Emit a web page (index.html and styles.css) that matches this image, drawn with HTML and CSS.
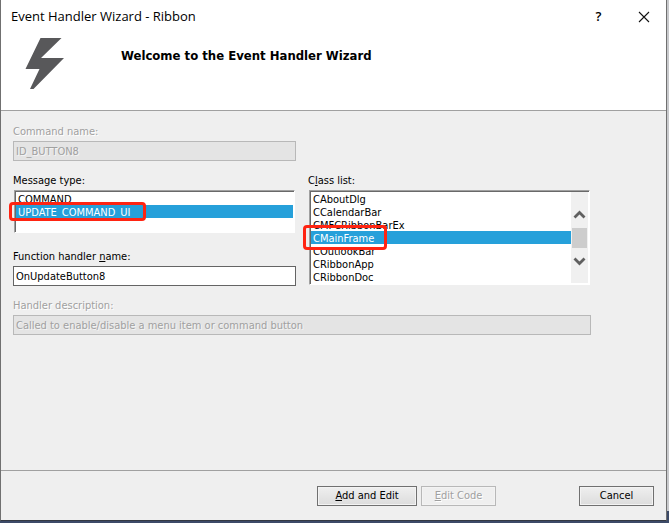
FILE: index.html
```html
<!DOCTYPE html>
<html lang="en">
<head>
<meta charset="utf-8">
<title>Event Handler Wizard - Ribbon</title>
<link rel="stylesheet" href="styles.css">
</head>
<body>
<form class="dialog">
  <header class="header">
    <div class="titlebar">
      <span class="title">Event Handler Wizard - Ribbon</span>
      <button type="button" class="caption" aria-label="Help">?</button>
      <button type="button" class="caption" aria-label="Close">
        <svg width="12" height="12" viewBox="0 0 12 12"><path d="M1 1L11 11M11 1L1 11" fill="none" stroke="#111" stroke-width="1.1"/></svg>
      </button>
    </div>
    <div class="banner">
      <svg class="bolt" width="40" height="52" viewBox="0 0 40 52"><path d="M15.500 0H36.500L16 20H39L8.500 51H5L14.500 31H0.500Z" fill="#58585a"/></svg>
      <h1 class="heading">Welcome to the Event Handler Wizard</h1>
    </div>
  </header>

  <main class="content">
    <div class="field left">
      <label class="dim" for="command">Command name:</label>
      <input id="command" value="ID_BUTTON8" disabled>
    </div>
    <div class="field left">
      <label for="message">Message type:</label>
      <div class="list short">
        <select id="message" size="3">
          <option>COMMAND</option>
          <option selected>UPDATE_COMMAND_UI</option>
        </select>
        <span class="mark mark-message"></span>
      </div>
    </div>
    <div class="field classes">
      <label for="classes">C<u>l</u>ass list:</label>
      <div class="list">
        <select id="classes" size="7">
          <option>CAboutDlg</option>
          <option>CCalendarBar</option>
          <option>CMFCRibbonBarEx</option>
          <option selected>CMainFrame</option>
          <option>COutlookBar</option>
          <option>CRibbonApp</option>
          <option>CRibbonDoc</option>
        </select>
        <div class="scroll" aria-hidden="true">
          <svg width="13" height="9" viewBox="0 0 13 9"><path d="M1.500 7.500L6.500 2.500L11.500 7.500" fill="none" stroke="#606060" stroke-width="2.800"/></svg>
          <span class="thumb"></span>
          <svg width="13" height="9" viewBox="0 0 13 9"><path d="M1.500 1.500L6.500 6.500L11.500 1.500" fill="none" stroke="#606060" stroke-width="2.800"/></svg>
        </div>
        <span class="mark mark-class"></span>
      </div>
    </div>
    <div class="field left">
      <label for="handler">Function handler <u>n</u>ame:</label>
      <input id="handler" value="OnUpdateButton8">
    </div>
    <div class="field wide">
      <label class="dim" for="description">Handler description:</label>
      <input id="description" value="Called to enable/disable a menu item or command button" disabled>
    </div>
  </main>

  <footer class="footer">
    <button type="button" class="btn primary"><u>A</u>dd and Edit</button>
    <button type="button" class="btn" disabled><u>E</u>dit Code</button>
    <button type="button" class="btn cancel">Cancel</button>
  </footer>
</form>
</body>
</html>
```
FILE: styles.css
```css
* { box-sizing: border-box; }

body {
  margin: 0;
  min-height: 100vh;
  display: flex;
  padding: 0 2px 2px 0;
  background: linear-gradient(#c8c9cc, #c8c9cc) right top / 2px calc(100% - 12px) no-repeat, #3c4a68;
  font: 11px/14px "DejaVu Sans Condensed", "DejaVu Sans", sans-serif;
  color: #000;
}

.dialog {
  flex: 1;
  display: flex;
  flex-direction: column;
  background: #efefef;
  border: 1px solid #707070;
  border-top: 0;
  border-bottom-color: #333842;
}

.header {
  height: 111px;
  background: #fff;
  border-bottom: 1px solid #a0a0a0;
}

.titlebar {
  display: flex;
  align-items: center;
  height: 31px;
  padding-left: 10px;
}

.title {
  flex: 1;
  font: 13px/18px "Open Sans", "Noto Sans", sans-serif;
}

.caption {
  width: 45px;
  height: 30px;
  padding: 0;
  border: 0;
  background: none;
  color: #000;
  font: 600 13px/18px "Open Sans", "Noto Sans", sans-serif;
}

.caption svg { vertical-align: middle; }

.banner {
  display: flex;
  padding: 7px 24px 0;
}

.heading {
  margin: 10px 0 0 56px;
  font: bold 13px/16px "DejaVu Sans Condensed", "DejaVu Sans", sans-serif;
}

.content {
  flex: 1;
  display: grid;
  grid-template-columns: 1fr 1fr;
  align-content: start;
  column-gap: 12px;
  row-gap: 13px;
  padding: 14px 75px 0 12px;
}

.field {
  display: flex;
  flex-direction: column;
  gap: 2px;
  min-width: 0;
}

.left { grid-column: 1; }
.classes { grid-column: 2; grid-row: 2 / span 2; }
.wide { grid-column: 1 / -1; }

.dim { color: #a0a0a0; text-shadow: 1px 1px #fff; }

input {
  width: 100%;
  height: 20px;
  padding: 0 2px;
  border: 1px solid #646464;
  border-radius: 0;
  background: #fff;
  color: #000;
  font: inherit;
}

input:disabled {
  background: #e4e4e4;
  border-color: #b8b8b8;
  color: #a0a0a0;
  text-shadow: 1px 1px #f4f4f4;
}

.list {
  position: relative;
  display: flex;
  height: 95px;
  margin: 0 1px;
  background: #fff;
  border: 1px solid;
  border-color: #a0a0a0 #fff #fff #a0a0a0;
  box-shadow: inset 1px 1px #696969;
  padding: 1px;
}

.short { height: 43px; margin-bottom: 4px; }

select {
  flex: 1;
  min-width: 0;
  padding: 0;
  border: 0;
  border-radius: 0;
  outline: 0;
  overflow: hidden;
  background: none;
  color: #000;
  font: inherit;
}

option {
  min-height: 13px;
  height: 13px;
  padding: 1px 2px 0;
  line-height: 12px;
}

option:checked {
  background: linear-gradient(#26a0da, #26a0da);
  color: #fff;
}

.scroll {
  width: 17px;
  display: flex;
  flex-direction: column;
  align-items: center;
  justify-content: center;
  gap: 9px;
  background: #f0f0f0;
}

.thumb {
  width: 15px;
  height: 20px;
  background: #cdcdcd;
}

.mark {
  position: absolute;
  border: 3px solid #ff2412;
  border-radius: 4px;
  pointer-events: none;
}

.mark-message { left: -6px; top: 11px; width: 137px; height: 19px; }
.mark-class { left: -7px; top: 34px; width: 84px; height: 25px; }

.footer {
  height: 50px;
  display: flex;
  gap: 4px;
  padding: 15px 12px 0;
  border-top: 1px solid #a0a0a0;
}

.btn {
  width: 75px;
  height: 20px;
  padding: 0;
  border: 1px solid #707070;
  border-radius: 0;
  background: linear-gradient(#efefef, #dcdcdc);
  box-shadow: inset 0 0 0 1px #f3f3f3;
  color: #000;
  font: inherit;
}

.btn:disabled {
  border-color: #b8b8b8;
  background: #efefef;
  color: #a0a0a0;
  text-shadow: 1px 1px #fff;
}

.primary { width: 100px; margin-left: auto; }
.cancel { margin-left: 79px; }
```
